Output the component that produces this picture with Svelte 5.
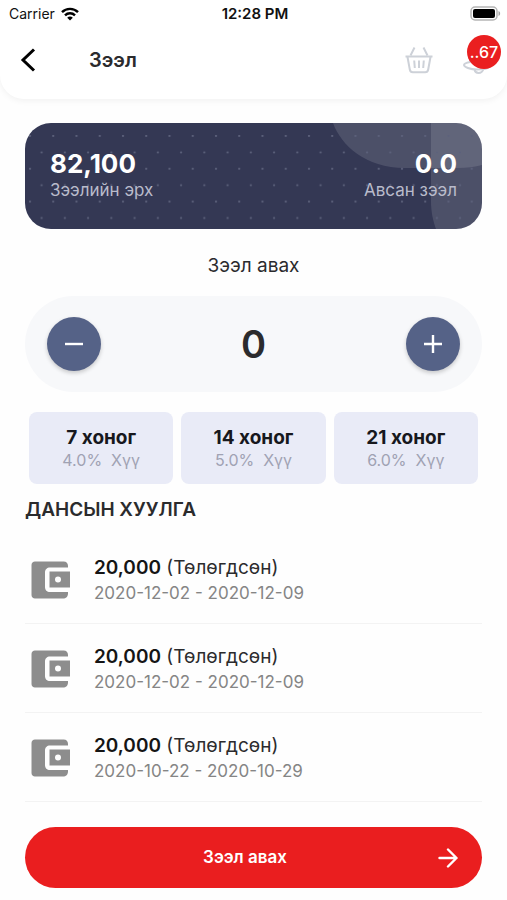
<script lang="ts">
	type Term = { days: number; rate: string };
	type Loan = { amount: string; status: string; from: string; to: string };

	const terms: Term[] = [
		{ days: 7, rate: '4.0%' },
		{ days: 14, rate: '5.0%' },
		{ days: 21, rate: '6.0%' }
	];

	const loans: Loan[] = [
		{ amount: '20,000', status: 'Төлөгдсөн', from: '2020-12-02', to: '2020-12-09' },
		{ amount: '20,000', status: 'Төлөгдсөн', from: '2020-12-02', to: '2020-12-09' },
		{ amount: '20,000', status: 'Төлөгдсөн', from: '2020-10-22', to: '2020-10-29' }
	];

	const step = 10000;
	const limit = 82100;

	let amount = $state(0);
</script>

<div class="screen">
	<header>
		<div class="status">
			<span class="carrier">
				Carrier
				<svg width="18" height="14" viewBox="0 0 18 14" fill="none" stroke="#000" stroke-width="2.4">
					<path d="M1 5.2C5.4.7 12.6.7 17 5.2" />
					<path d="M4 8.3c2.8-2.8 7.2-2.8 10 0" />
					<path d="M9 13.6 6.2 10.7c1.6-1.5 4-1.5 5.6 0z" fill="#000" stroke="none" />
				</svg>
			</span>
			<span class="time">12:28 PM</span>
			<span class="battery">
				<svg width="31" height="15" viewBox="0 0 31 15">
					<rect x="1" y="1" width="26" height="13" rx="4" fill="#fff" stroke="#b5b5b5" stroke-width="1.5" />
					<rect x="3" y="3" width="22" height="9" rx="2" fill="#000" />
					<path d="M28.5 5v5c2.2-.8 2.2-4.2 0-5z" fill="#a5a5a5" />
				</svg>
			</span>
		</div>
		<nav>
			<button class="icon back" aria-label="Буцах">
				<svg width="16" height="26" viewBox="0 0 16 26" fill="none" stroke="#000" stroke-width="3">
					<path d="M14 2.5 3 13l11 10.5" />
				</svg>
			</button>
			<h1>Зээл</h1>
			<button class="icon" aria-label="Сагс">
				<svg width="28" height="28" viewBox="0 0 28 28" fill="none" stroke="#cdd1d8" stroke-width="2" stroke-linejoin="round">
					<path d="M.5 10.5h27M2.5 11l2.3 12.5c.3 1.8 1.3 2.7 3 2.7h12.4c1.7 0 2.7-.9 3-2.7L25.5 11" />
					<path d="M5.5 9.5 9.5 1.5M22.5 9.5 18.5 1.5M9.2 14.5l.6 7.5M14 14.5V22M18.8 14.5l-.6 7.5" />
				</svg>
			</button>
			<button class="icon bell" aria-label="Мэдэгдэл">
				<svg width="30" height="28" viewBox="0 0 30 28" fill="none" stroke="#cdd1d8" stroke-width="2" stroke-linejoin="round">
					<path d="M7 16c-4 .8-6 2-6 3 0 2 6 4.500 13 4.500 6 0 11-.8 12-2.500.5-1-3-4-3-9 0-5-4-9-9-9s-7 4-7 9z" />
					<path d="M11.500 23.500c.5 2.500 2 3.500 4 3.500s4-1 5-4" />
				</svg>
				<span class="badge">..67</span>
			</button>
		</nav>
	</header>

	<main>
		<section class="card">
			<svg class="art" viewBox="0 0 457 106" preserveAspectRatio="xMaxYMid slice" aria-hidden="true">
				<defs>
					<pattern id="dots" x="3" y="12" width="23.25" height="32.8" patternUnits="userSpaceOnUse">
						<circle cx="2" cy="1" r="1.1" fill="#5c617b" />
						<circle cx="13.6" cy="17.4" r="1.1" fill="#5c617b" />
					</pattern>
				</defs>
				<path d="M308 0c8 22 32 45 72 45h52c10 0 18-1 25-3V0z" fill="#fff" fill-opacity=".12" />
				<path d="M406 0v78c0 11 2 20 5 28h46V0z" fill="#fff" fill-opacity=".12" />
				<rect width="457" height="106" fill="url(#dots)" />
			</svg>
			<div class="figure">
				<strong>82,100</strong>
				<span>Зээлийн эрх</span>
			</div>
			<div class="figure right">
				<strong>0.0</strong>
				<span>Авсан зээл</span>
			</div>
		</section>

		<h2 class="caption">Зээл авах</h2>

		<div class="stepper">
			<button aria-label="Хасах" onclick={() => (amount = Math.max(0, amount - step))}>
				<svg width="18" height="18" viewBox="0 0 18 18" stroke="#fff" stroke-width="2.4"><path d="M0 9h18" /></svg>
			</button>
			<output>{amount}</output>
			<button aria-label="Нэмэх" onclick={() => (amount = Math.min(limit, amount + step))}>
				<svg width="18" height="18" viewBox="0 0 18 18" stroke="#fff" stroke-width="2.4"><path d="M0 9h18M9 0v18" /></svg>
			</button>
		</div>

		<div class="terms">
			{#each terms as term}
				<button>
					<strong>{term.days} хоног</strong>
					<span>{term.rate}&nbsp; Хүү</span>
				</button>
			{/each}
		</div>

		<h2 class="heading">ДАНСЫН ХУУЛГА</h2>

		<ul>
			{#each loans as loan}
				<li>
					<svg width="40" height="38" viewBox="0 0 40 38" aria-hidden="true">
						<path
							d="M4 .5h28.500c3 0 4.500 2 4.500 4.500v1.500H19c-3 0-5 2-5 5v14.500c0 3 2 5 5 5h18v1.500c0 3-2 5-5 5H4c-2 0-3.500-1.500-3.500-3.500V4C.5 2 2 .5 4 .5z"
							fill="#8d8d8d"
						/>
						<path fill-rule="evenodd" d="M18.500 10.500h20.500v16H18.500zM27 15.500a3 3 0 1 0 0 6 3 3 0 0 0 0-6z" fill="#8d8d8d" />
					</svg>
					<div>
						<p class="sum"><strong>{loan.amount}</strong> ({loan.status})</p>
						<p class="dates">{loan.from} - {loan.to}</p>
					</div>
				</li>
			{/each}
		</ul>

		<button class="submit">
			<span>Зээл авах</span>
			<svg width="20" height="20" viewBox="0 0 20 20" fill="none" stroke="#fff" stroke-width="2.4" stroke-linecap="round" stroke-linejoin="round">
				<path d="M1.5 10h17M10 1.5l8.5 8.5-8.5 8.5" />
			</svg>
		</button>
	</main>
</div>

<style>
	:global(body) {
		background: #fefefe;
	}

	.screen {
		font-family: Inter, 'Noto Sans', sans-serif;
		color: #2b2b2d;
	}

	button {
		border: 0;
		padding: 0;
		background: none;
		font: inherit;
		color: inherit;
		cursor: pointer;
	}

	svg {
		display: block;
		flex: none;
	}

	h1,
	h2,
	p,
	ul {
		margin: 0;
		padding: 0;
	}

	header {
		background: #fff;
		border-radius: 0 0 24px 24px;
		box-shadow: 0 2px 6px rgba(0, 0, 0, 0.05);
	}

	.status {
		display: grid;
		grid-template-columns: 1fr auto 1fr;
		align-items: center;
		height: 27px;
		padding: 0 6px 0 9px;
		font-size: 14px;
		color: #111;
	}

	.carrier {
		display: flex;
		align-items: center;
		gap: 6px;
	}

	.time {
		font-size: 15px;
		font-weight: 600;
	}

	.battery {
		justify-self: end;
	}

	nav {
		display: flex;
		align-items: center;
		height: 66px;
		padding: 0 14px 6px 20px;
	}

	.back {
		margin-right: 53px;
	}

	h1 {
		flex: 1;
		font-size: 20px;
		font-weight: 600;
	}

	.bell {
		position: relative;
		margin-left: 30px;
	}

	.badge {
		position: absolute;
		top: -11px;
		right: -8px;
		width: 34px;
		line-height: 34px;
		border-radius: 50%;
		background: #ea1f20;
		color: #fff;
		font-size: 16px;
		font-weight: 500;
		text-align: center;
	}

	main {
		padding: 24px 25px 12px;
	}

	.card {
		position: relative;
		display: flex;
		justify-content: space-between;
		padding: 26px 25px 27px;
		border-radius: 26px;
		background: #343854;
		overflow: hidden;
	}

	.art {
		position: absolute;
		inset: 0;
		width: 100%;
		height: 100%;
	}

	.figure {
		position: relative;
		display: flex;
		flex-direction: column;
	}

	.right {
		align-items: flex-end;
	}

	.figure strong {
		font-size: 26px;
		line-height: 29px;
		font-weight: 700;
		color: #fff;
	}

	.figure span {
		font-size: 17px;
		line-height: 24px;
		color: #b9bbcb;
	}

	.caption {
		padding: 24px 0 18px;
		font-size: 19px;
		line-height: 25px;
		font-weight: 400;
		text-align: center;
	}

	.stepper {
		display: flex;
		align-items: center;
		justify-content: space-between;
		padding: 21px 22px;
		border-radius: 48px;
		background: #f7f8fa;
	}

	.stepper button {
		display: grid;
		place-items: center;
		width: 54px;
		height: 54px;
		border-radius: 50%;
		background: #556287;
		box-shadow: 0 2px 4px rgba(0, 0, 0, 0.2);
	}

	output {
		font-size: 38px;
		line-height: 54px;
		font-weight: 600;
	}

	.terms {
		display: grid;
		grid-template-columns: repeat(3, 1fr);
		gap: 8px;
		margin: 20px 4px 0;
	}

	.terms button {
		display: flex;
		flex-direction: column;
		align-items: center;
		padding: 15px 0 13px;
		border-radius: 8px;
		background: #e9ebf7;
	}

	.terms strong {
		font-size: 19px;
		line-height: 22px;
		font-weight: 700;
		color: #17181d;
	}

	.terms span {
		font-size: 16px;
		line-height: 22px;
		color: #a0a2b3;
	}

	.heading {
		padding-top: 13px;
		font-size: 19px;
		line-height: 25px;
		font-weight: 600;
	}

	ul {
		padding-top: 13px;
		list-style: none;
	}

	li {
		display: flex;
		align-items: center;
		gap: 23px;
		padding: 20px 6px 18px;
		border-bottom: 1px solid #f3f3f3;
	}

	.sum {
		font-size: 19px;
		line-height: 26px;
	}

	.sum strong {
		font-weight: 600;
		color: #151515;
	}

	.dates {
		font-size: 17px;
		line-height: 24px;
		color: #858585;
	}

	.submit {
		display: flex;
		align-items: center;
		width: 100%;
		margin-top: 25px;
		padding: 18px 24px 18px 27px;
		border-radius: 31px;
		background: #ea1e1f;
		color: #fff;
		font-size: 17px;
		line-height: 25px;
		font-weight: 600;
	}

	.submit span {
		flex: 1;
	}
</style>
